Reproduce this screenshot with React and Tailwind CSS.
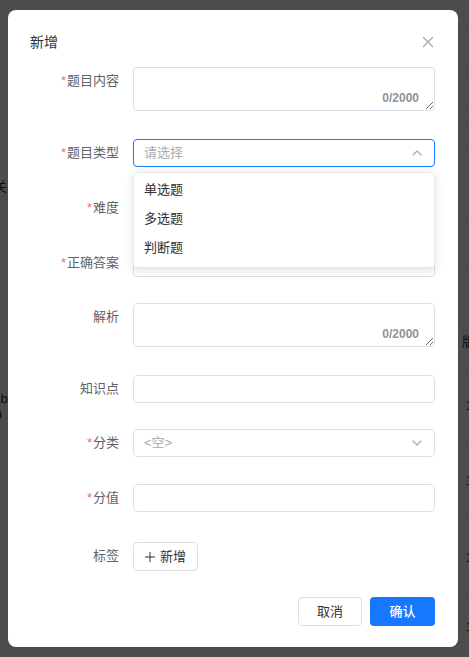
import { useState } from "react";

const FONT = "font-['Liberation_Sans','Noto_Sans_CJK_SC',sans-serif]";

const ChevronIcon = ({ up }) => (
  <svg width="10" height="6" viewBox="0 0 10 6" fill="none" className="shrink-0">
    <path
      d={up ? "M1 5L5 1L9 5" : "M1 1L5 5L9 1"}
      stroke="#a8abb2"
      strokeWidth="1.2"
      strokeLinecap="round"
      strokeLinejoin="round"
    />
  </svg>
);

const Label = ({ text, required }) => (
  <div className="w-[105px] shrink-0 pr-[14px] text-right text-[13px] leading-[28px] text-[#606266]">
    {required && <span className="mr-[1px] text-[#f56c6c]">*</span>}
    {text}
  </div>
);

const TextArea = () => (
  <div className="relative flex-1">
    <textarea className="block h-[44px] w-full resize-y rounded-[4px] border border-[#dcdfe6] px-[10px] py-[5px] text-[13px] text-[#303133] outline-none" />
    <span className="absolute bottom-[6px] right-[16px] text-[12px] leading-[14px] font-bold text-[#909399]">
      0/2000
    </span>
  </div>
);

const Input = () => (
  <input className="h-[28px] flex-1 rounded-[4px] border border-[#dcdfe6] px-[10px] text-[13px] text-[#303133] outline-none" />
);

// background page, mostly hidden behind the mask
const BackRow = ({ h, left, right, className = "" }) => (
  <div className={"flex items-center justify-between border-b border-[#ebeef5] " + h + " " + className}>
    <span className="-ml-[6px] text-[13px] leading-[15px] text-[#303133]">{left}</span>
    <span className="-mr-[4px] text-[13px] text-[#303133]">{right}</span>
  </div>
);

export default function App() {
  const [open] = useState(true);
  const options = ["单选题", "多选题", "判断题"];

  return (
    <div className={"relative h-[657px] w-full overflow-hidden bg-white " + FONT}>
      <div className="flex flex-col">
        <BackRow h="h-[27px]" />
        <BackRow h="h-[41px]" />
        <BackRow h="h-[11px]" />
        <BackRow h="h-[32px]" />
        <BackRow h="h-[11px]" />
        <BackRow h="h-[29px]" />
        <BackRow h="h-[71px]" left="关" />
        <BackRow h="h-[44px]" />
        <div className="flex h-[104px] items-end justify-end border-b border-[#ebeef5] pb-[18px]">
          <span className="-mr-[6px] text-[13px] text-[#303133]">版</span>
        </div>
        <BackRow
          h="h-[73px]"
          left={
            <span className="-ml-[8px] flex flex-col">
              <span>Lab</span>
              <span>An</span>
            </span>
          }
          right="1"
        />
        <BackRow h="h-[76px]" right="1" />
        <BackRow h="h-[78px]" right="1" />
        <BackRow h="h-[60px]" right="1" className="border-b-0" />
      </div>

      <div className="absolute inset-0 bg-black/70" />

      <div className="absolute left-[8px] top-[10px] w-[450px] rounded-[8px] bg-white px-[20px] pb-[21px] pt-[22px]">
        <div className="flex h-[20px] items-center justify-between pl-[2px] pr-[4px]">
          <span className="text-[14px] text-[#303133]">新增</span>
          <svg width="12" height="12" viewBox="0 0 12 12" fill="none">
            <path d="M1 1L11 11M11 1L1 11" stroke="#a8abb2" strokeWidth="1.3" />
          </svg>
        </div>

        <div className="mt-[15px] flex flex-col pr-[3px]">
          <div className="mb-[28px] flex">
            <Label text="题目内容" required />
            <TextArea />
          </div>

          <div className="mb-[27px] flex">
            <Label text="题目类型" required />
            <div className="relative flex-1">
              <div className="flex h-[28px] items-center justify-between rounded-[4px] border border-[#1677ff] pl-[10px] pr-[12px]">
                <span className="text-[13px] text-[#a8abb2]">请选择</span>
                <ChevronIcon up />
              </div>
              {open && (
                <div className="absolute left-0 right-0 top-full z-10 mt-[5px] rounded-[4px] border border-[#e4e7ed] bg-white pb-[5px] pt-[2px] shadow-[0_2px_10px_rgba(0,0,0,0.12)]">
                  {options.map((o) => (
                    <div key={o} className="flex h-[29px] items-center px-[10px] text-[13px] text-[#303133]">
                      {o}
                    </div>
                  ))}
                </div>
              )}
            </div>
          </div>

          <div className="mb-[27px] flex">
            <Label text="难度" required />
            <Input />
          </div>

          <div className="mb-[26px] flex">
            <Label text="正确答案" required />
            <Input />
          </div>

          <div className="mb-[28px] flex">
            <Label text="解析" />
            <TextArea />
          </div>

          <div className="mb-[26px] flex">
            <Label text="知识点" />
            <Input />
          </div>

          <div className="mb-[27px] flex">
            <Label text="分类" required />
            <div className="flex h-[28px] flex-1 items-center justify-between rounded-[4px] border border-[#dcdfe6] pl-[10px] pr-[12px]">
              <span className="text-[13px] text-[#a8abb2]">&lt;空&gt;</span>
              <ChevronIcon />
            </div>
          </div>

          <div className="mb-[30px] flex">
            <Label text="分值" required />
            <Input />
          </div>

          <div className="flex">
            <Label text="标签" />
            <button className="flex h-[29px] w-[65px] items-center justify-center gap-[5px] rounded-[4px] border border-[#dcdfe6] bg-white text-[13px] text-[#303133]">
              <svg width="10" height="10" viewBox="0 0 10 10" fill="none">
                <path d="M5 0V10M0 5H10" stroke="#303133" strokeWidth="1" />
              </svg>
              新增
            </button>
          </div>
        </div>

        <div className="mt-[26px] flex justify-end gap-[8px] pr-[3px]">
          <button className="h-[29px] w-[64px] rounded-[4px] border border-[#dcdfe6] bg-white text-[13px] text-[#303133]">
            取消
          </button>
          <button className="h-[29px] w-[65px] rounded-[4px] bg-[#1677ff] text-[13px] font-medium text-white">
            确认
          </button>
        </div>
      </div>
    </div>
  );
}
